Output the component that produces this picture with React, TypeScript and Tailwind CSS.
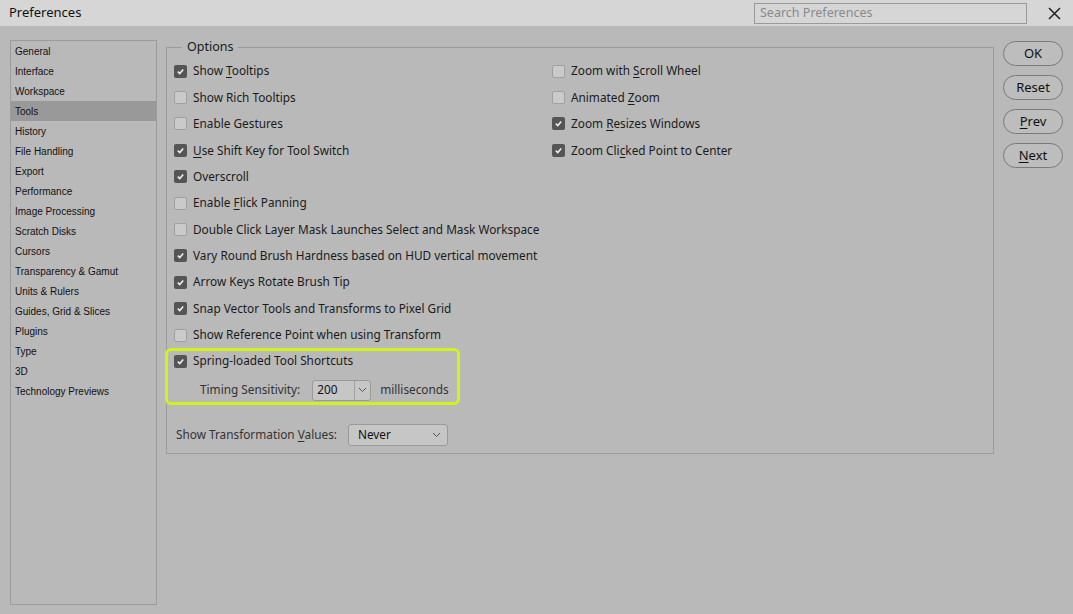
import { ReactNode } from "react"

const sidebar = [
    "General",
    "Interface",
    "Workspace",
    "Tools",
    "History",
    "File Handling",
    "Export",
    "Performance",
    "Image Processing",
    "Scratch Disks",
    "Cursors",
    "Transparency & Gamut",
    "Units & Rulers",
    "Guides, Grid & Slices",
    "Plugins",
    "Type",
    "3D",
    "Technology Previews",
]

// label with an optional underlined mnemonic at index u
const Mn = ({ text, u }: { text: string; u?: number }) => {
    if (u === undefined) return <>{text}</>
    return (
        <>
            {text.slice(0, u)}
            <span className="underline underline-offset-2">{text[u]}</span>
            {text.slice(u + 1)}
        </>
    )
}

const Check = ({ on }: { on: boolean }) =>
    on ? (
        <span className="flex h-[13px] w-[13px] shrink-0 items-center justify-center rounded-[2px] bg-[#555555]">
            <svg width="9" height="9" viewBox="0 0 10 10">
                <path d="M2 5.2 L4.2 7.3 L8 2.8" fill="none" stroke="#eeeeee" strokeWidth="1.8" />
            </svg>
        </span>
    ) : (
        <span className="h-[13px] w-[13px] shrink-0 rounded-[2px] border border-[#a0a0a0] bg-[#cacaca]" />
    )

const Row = ({ on, h = "h-[26.4px]", children }: { on: boolean; h?: string; children: ReactNode }) => (
    <div className={`flex ${h} items-center gap-[6px] whitespace-nowrap`}>
        <Check on={on} />
        <span>{children}</span>
    </div>
)

const Chevron = () => (
    <svg width="9" height="6" viewBox="0 0 9 6">
        <path d="M1 1 L4.5 4.5 L8 1" fill="none" stroke="#555" strokeWidth="1" />
    </svg>
)

const PillButton = ({ children }: { children: ReactNode }) => (
    <button className="h-[25px] w-[60px] rounded-full border border-[#7a7a7a] bg-[#bdbdbd] text-[13px] text-[#111]">
        {children}
    </button>
)

export default function App() {
    return (
        <div
            className="flex h-[614px] w-[1073px] flex-col overflow-hidden bg-[#b9b9b9] text-[11.8px] text-[#1b1b1b]"
            style={{ fontFamily: '"Noto Sans", "Open Sans", sans-serif' }}
        >
            {/* title bar */}
            <div className="flex h-[26px] shrink-0 items-center bg-[#d6d6d6] pl-[9px] pr-[12px]">
                <span className="text-[13px] text-[#111]">Preferences</span>
                <div className="ml-auto flex h-[21px] w-[273px] items-center border border-[#9a9a9a] bg-[#d6d6d6] px-[5px] text-[12.5px] text-[#8a8a8a]">
                    Search Preferences
                </div>
                <svg className="ml-[21px]" width="13" height="13" viewBox="0 0 13 13">
                    <path d="M1 1 L12 12 M12 1 L1 12" stroke="#222" strokeWidth="1.5" />
                </svg>
            </div>

            <div className="flex flex-1 gap-[9px] pl-[10px] pb-[9px] pt-[14px]">
                {/* sidebar */}
                <div
                    className="flex w-[147px] shrink-0 flex-col border border-[#9c9c9c] text-[10px] text-[#111]"
                    style={{ fontFamily: '"Liberation Sans", Arial, sans-serif' }}
                >
                    {sidebar.map((s) => (
                        <div
                            key={s}
                            className={`flex h-[20px] items-center pl-[4px] ${s === "Tools" ? "bg-[#999999]" : ""}`}
                        >
                            {s}
                        </div>
                    ))}
                </div>

                {/* options */}
                <div className="flex shrink-0 flex-col pt-[7px]">
                    <div className="relative h-[407px] w-[828px] border border-[#9c9c9c] pl-[7px] pt-[10px]">
                        <span className="absolute left-[15px] top-[-9px] bg-[#b9b9b9] px-[5px] text-[12.5px] leading-[16px]">
                            Options
                        </span>
                        <div className="flex">
                            <div className="flex w-[378px] flex-col">
                                <Row on><Mn text="Show Tooltips" u={5} /></Row>
                                <Row on={false}>Show Rich Tooltips</Row>
                                <Row on={false}>Enable Gestures</Row>
                                <Row on><Mn text="Use Shift Key for Tool Switch" u={0} /></Row>
                                <Row on>Overscroll</Row>
                                <Row on={false}><Mn text="Enable Flick Panning" u={7} /></Row>
                                <Row on={false}>Double Click Layer Mask Launches Select and Mask Workspace</Row>
                                <Row on>Vary Round Brush Hardness based on HUD vertical movement</Row>
                                <Row on>Arrow Keys Rotate Brush Tip</Row>
                                <Row on>Snap Vector Tools and Transforms to Pixel Grid</Row>
                                <Row on={false}>Show Reference Point when using Transform</Row>
                            </div>
                            <div className="flex flex-col">
                                <Row on={false}><Mn text="Zoom with Scroll Wheel" u={10} /></Row>
                                <Row on={false}><Mn text="Animated Zoom" u={9} /></Row>
                                <Row on><Mn text="Zoom Resizes Windows" u={5} /></Row>
                                <Row on><Mn text="Zoom Clicked Point to Center" u={8} /></Row>
                            </div>
                        </div>

                        {/* highlighted group */}
                        <div className="ml-[-9px] h-[57px] w-[295px] rounded-[6px] border-[3px] border-[#d2f21c] pl-[6px]">
                            <Row on h="h-[20px]">Spring-loaded Tool Shortcuts</Row>
                            <div className="mt-[7px] flex h-[24px] items-center pl-[26px] whitespace-nowrap">
                                <span className="text-[#333]">Timing Sensitivity:</span>
                                <div className="ml-[12px] flex h-[21px] w-[59px] items-stretch rounded-[3px] border border-[#9a9a9a] bg-[#c6c6c6]">
                                    <span className="flex flex-1 items-center pl-[4px] text-[#111]">200</span>
                                    <span className="flex w-[16px] items-center justify-center border-l border-[#a2a2a2]">
                                        <Chevron />
                                    </span>
                                </div>
                                <span className="ml-[9px] text-[#333]">milliseconds</span>
                            </div>
                        </div>

                        <div className="mt-[19px] flex items-center whitespace-nowrap pl-[2px]">
                            <span className="text-[#333]"><Mn text="Show Transformation Values:" u={20} /></span>
                            <div className="ml-[11px] flex h-[22px] w-[100px] items-center justify-between rounded-[3px] border border-[#9a9a9a] bg-[#c6c6c6] pl-[9px] pr-[6px]">
                                <span className="text-[#111]">Never</span>
                                <Chevron />
                            </div>
                        </div>
                    </div>
                </div>

                {/* buttons */}
                <div className="flex shrink-0 flex-col gap-[9px] pt-[1px]">
                    <PillButton>OK</PillButton>
                    <PillButton>Reset</PillButton>
                    <PillButton><Mn text="Prev" u={0} /></PillButton>
                    <PillButton><Mn text="Next" u={0} /></PillButton>
                </div>
            </div>
        </div>
    )
}
